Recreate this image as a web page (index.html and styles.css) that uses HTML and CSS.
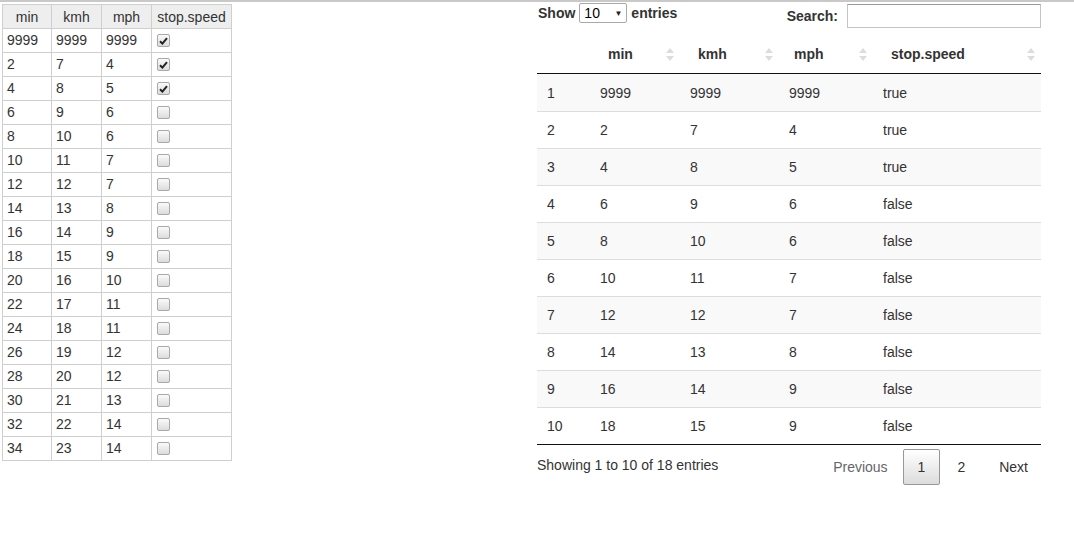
FILE: index.html
```html
<!DOCTYPE html>
<html>
<head>
<meta charset="utf-8">
<link rel="stylesheet" href="styles.css">
</head>
<body>
<div class="page">
  <table class="grid">
    <thead>
      <tr><th class="c1">min</th><th class="c2">kmh</th><th class="c3">mph</th><th class="c4">stop.speed</th></tr>
    </thead>
    <tbody id="gridbody"></tbody>
  </table>

  <div class="dt">
    <div class="dt-top">
      <div class="len"><b>Show</b><span class="sel">10<span class="arrow">▼</span></span><b>entries</b></div>
      <div class="search"><b>Search:</b><span class="inp"></span></div>
    </div>
    <table class="data">
      <thead>
        <tr>
          <th class="d0"></th>
          <th class="d1">min<span class="sort"></span></th>
          <th class="d2">kmh<span class="sort"></span></th>
          <th class="d3">mph<span class="sort"></span></th>
          <th class="d4">stop.speed<span class="sort"></span></th>
        </tr>
      </thead>
      <tbody id="databody"></tbody>
    </table>
    <div class="dt-bottom">
      <div class="info">Showing 1 to 10 of 18 entries</div>
      <div class="pager">
        <span class="pg prev">Previous</span>
        <span class="pg cur">1</span>
        <span class="pg two">2</span>
        <span class="pg next">Next</span>
      </div>
    </div>
  </div>
</div>
<script>
var rows = [
  [9999,9999,9999,true],[2,7,4,true],[4,8,5,true],[6,9,6,false],[8,10,6,false],
  [10,11,7,false],[12,12,7,false],[14,13,8,false],[16,14,9,false],[18,15,9,false],
  [20,16,10,false],[22,17,11,false],[24,18,11,false],[26,19,12,false],[28,20,12,false],
  [30,21,13,false],[32,22,14,false],[34,23,14,false]
];
var g = document.getElementById('gridbody');
var check = '<svg width="9" height="8" viewBox="0 0 9 8"><path d="M1 4.2 L3.4 6.6 L8 1.2" fill="none" stroke="#222" stroke-width="2"/></svg>';
rows.forEach(function(r){
  var tr = document.createElement('tr');
  tr.innerHTML = '<td>'+r[0]+'</td><td>'+r[1]+'</td><td>'+r[2]+'</td><td><span class="cb">'+(r[3]?check:'')+'</span></td>';
  g.appendChild(tr);
});
var d = document.getElementById('databody');
rows.slice(0,10).forEach(function(r,i){
  var tr = document.createElement('tr');
  tr.innerHTML = '<td>'+(i+1)+'</td><td>'+r[0]+'</td><td>'+r[1]+'</td><td>'+r[2]+'</td><td>'+(r[3]?'true':'false')+'</td>';
  d.appendChild(tr);
});
</script>
</body>
</html>
```

FILE: styles.css
```css
html, body {
  margin: 0;
  padding: 0;
  background: #fff;
}
body {
  font-family: "Liberation Sans", Arial, sans-serif;
  font-size: 14px;
  color: #333;
}
.page {
  border-top: 2px solid #c9c9c9;
  display: flex;
  align-items: flex-start;
  padding-top: 1px;
}

/* left grid */
.grid {
  border-collapse: collapse;
  margin: 1px 0 0 2px;
  table-layout: fixed;
  width: 230px;
}
.grid th, .grid td {
  border: 1px solid #cfcfcf;
  height: 23px;
  padding: 0 4px;
  font-weight: normal;
  line-height: 16px;
  white-space: nowrap;
}
.grid td { height: 22px; padding-bottom: 1px; }
.grid th {
  background: #eeeeee;
  text-align: center;
  color: #333;
}
.grid .c1 { width: 40px; }
.grid .c2 { width: 41px; }
.grid .c3 { width: 41px; }
.grid .c4 { width: 71px; }
.cb {
  display: inline-block;
  width: 11px;
  height: 11px;
  border: 1px solid #a9a9a9;
  border-radius: 2px;
  background: linear-gradient(#fafafa, #dcdcdc);
  vertical-align: -2px;
  margin-left: 1px;
  position: relative;
}
.cb svg {
  position: absolute;
  left: 1px;
  top: 2px;
}

/* data table */
.dt {
  margin-left: 305px;
  width: 504px;
}
.dt-top {
  display: flex;
  justify-content: space-between;
  align-items: flex-start;
  height: 32px;
}
.len {
  display: flex;
  align-items: center;
  gap: 4px;
  padding-left: 1px;
  height: 20px;
}
.len b, .search b { font-weight: bold; color: #333; }
.sel {
  display: inline-flex;
  align-items: center;
  justify-content: space-between;
  width: 38px;
  height: 18px;
  border: 1px solid #a9a9a9;
  border-radius: 2px;
  padding: 0 4px;
  font-size: 14px;
  color: #000;
  background: #fff;
}
.arrow { font-size: 8px; color: #222; }
.search {
  display: flex;
  align-items: center;
  gap: 9px;
  height: 25px;
}
.inp {
  display: inline-block;
  width: 192px;
  height: 22px;
  border: 1px solid #c4c4c4;
  border-top-color: #9a9a9a;
  background: #fff;
}

.data {
  width: 504px;
  border-collapse: collapse;
  table-layout: fixed;
}
.data th {
  text-align: left;
  font-weight: bold;
  padding: 0 18px 0 18px;
  height: 38px;
  border-bottom: 1px solid #111;
  position: relative;
}
.data .d0 { width: 53px; padding: 0; }
.data .d1 { width: 90px; box-sizing: border-box; }
.data .d2 { width: 99px; box-sizing: border-box; }
.data .d3 { width: 94px; box-sizing: border-box; padding-left: 15px; }
.data .d4 { box-sizing: border-box; }
.sort {
  position: absolute;
  right: 6px;
  top: 13px;
  width: 8px;
  height: 13px;
}
.sort::before, .sort::after {
  content: "";
  position: absolute;
  left: 0;
  border-left: 4px solid transparent;
  border-right: 4px solid transparent;
}
.sort::before { top: 0; border-bottom: 5px solid #dcdcdc; }
.sort::after { bottom: 0; border-top: 5px solid #dcdcdc; }
.data td {
  height: 36px;
  padding: 0 10px;
  border-top: 1px solid #ddd;
}
.data tbody tr:first-child td { border-top: none; height: 37px; }
.data tbody tr:nth-child(odd) { background: #f9f9f9; }
.data tbody tr:last-child td { border-bottom: 1px solid #111; }

.dt-bottom {
  display: flex;
  justify-content: space-between;
  align-items: flex-start;
  padding-top: 4px;
}
.info { padding-top: 8px; }
.pager {
  display: flex;
  align-items: center;
}
.pg {
  display: inline-block;
  padding: 9px 12px;
  line-height: 16px;
  border: 1px solid transparent;
  border-radius: 2px;
  color: #333;
  margin-left: 2px;
}
.pg.prev { color: #666; }
.pg.two { margin-left: 4px; }
.pg.next { margin-left: 8px; }
.pg.cur {
  border-color: #979797;
  background: linear-gradient(#fff, #dcdcdc);
  padding: 9px 14px;
}
```
